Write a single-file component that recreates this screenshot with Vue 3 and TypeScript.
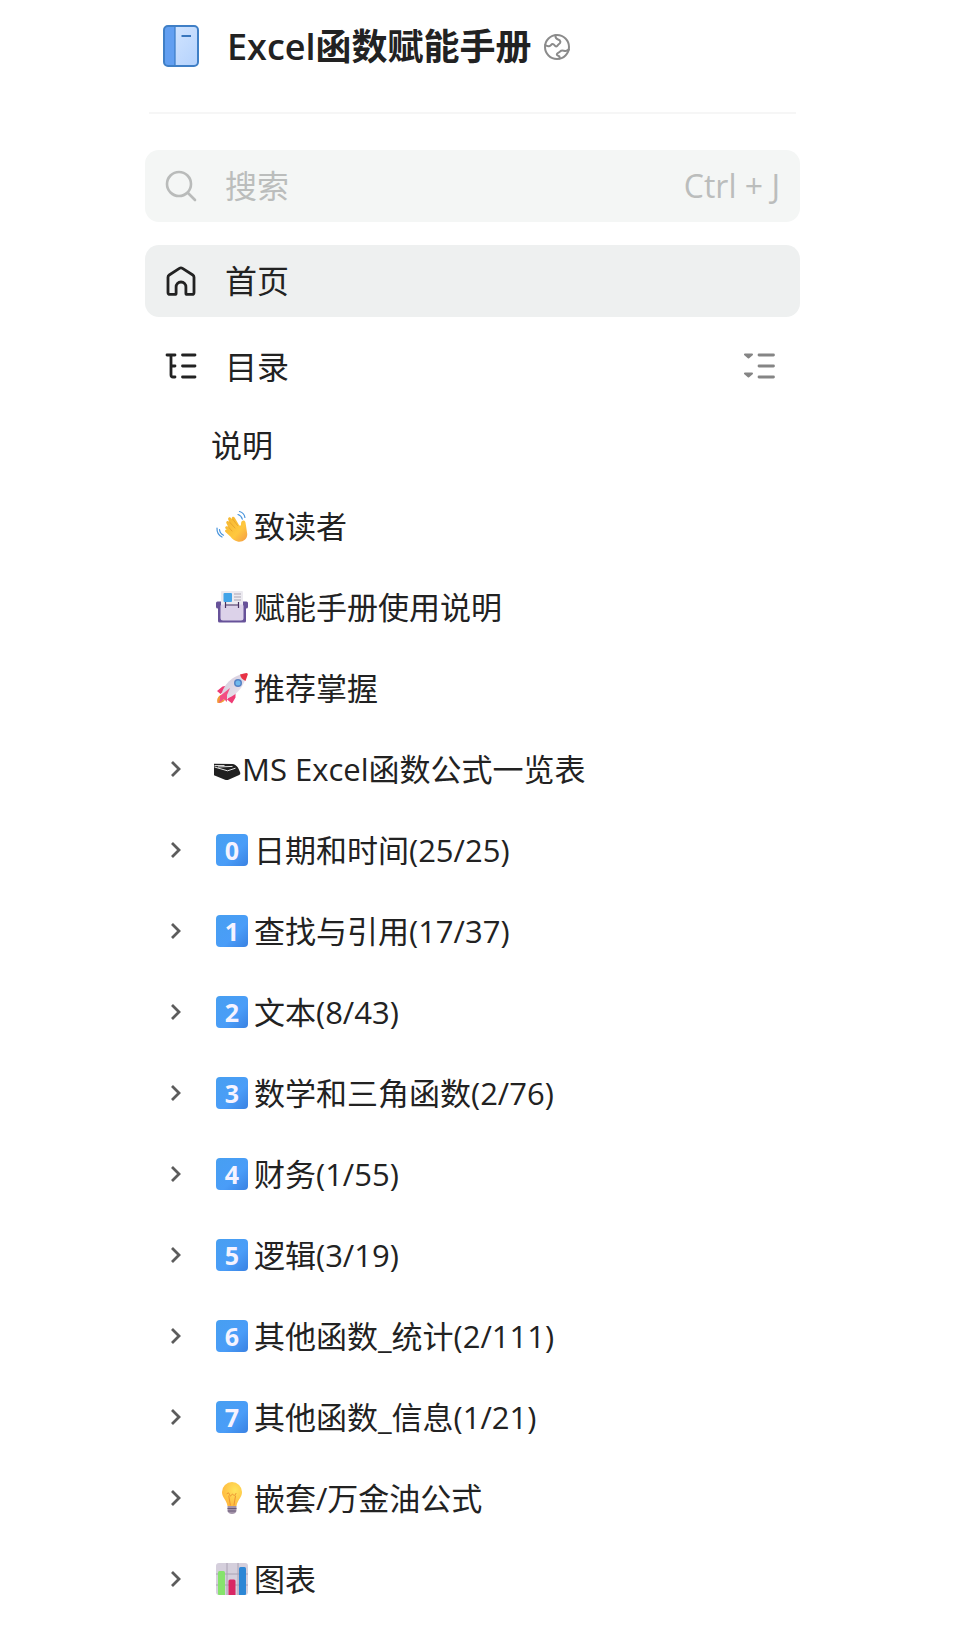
<script setup lang="ts">
import { ref } from 'vue'

interface Chapter {
  icon?: 'wave' | 'cards' | 'rocket' | 'tray' | 'bulb' | 'chart' | 'digit'
  digit?: string
  title: string
  expandable: boolean
}

const keyword = ref('')

const chapters: Chapter[] = [
  { title: '说明', expandable: false },
  { icon: 'wave', title: '致读者', expandable: false },
  { icon: 'cards', title: '赋能手册使用说明', expandable: false },
  { icon: 'rocket', title: '推荐掌握', expandable: false },
  { icon: 'tray', title: 'MS Excel函数公式一览表', expandable: true },
  { icon: 'digit', digit: '0', title: '日期和时间(25/25)', expandable: true },
  { icon: 'digit', digit: '1', title: '查找与引用(17/37)', expandable: true },
  { icon: 'digit', digit: '2', title: '文本(8/43)', expandable: true },
  { icon: 'digit', digit: '3', title: '数学和三角函数(2/76)', expandable: true },
  { icon: 'digit', digit: '4', title: '财务(1/55)', expandable: true },
  { icon: 'digit', digit: '5', title: '逻辑(3/19)', expandable: true },
  { icon: 'digit', digit: '6', title: '其他函数_统计(2/111)', expandable: true },
  { icon: 'digit', digit: '7', title: '其他函数_信息(1/21)', expandable: true },
  { icon: 'bulb', title: '嵌套/万金油公式', expandable: true },
  { icon: 'chart', title: '图表', expandable: true },
]
</script>

<template>
  <aside class="sidebar">
    <header class="book">
      <svg class="book-icon" viewBox="0 0 36 44" aria-hidden="true">
        <defs>
          <linearGradient id="cover" x1="0" y1="0" x2="1" y2="1">
            <stop offset="0" stop-color="#d6e7ff" />
            <stop offset="1" stop-color="#b4d2fd" />
          </linearGradient>
        </defs>
        <rect x="1" y="1" width="34" height="40" rx="4" fill="url(#cover)" />
        <path d="M5 1h7v40H5a4 4 0 0 1-4-4V5a4 4 0 0 1 4-4z" fill="#629ff1" />
        <path d="M12 1v40" stroke="#3e7fc9" stroke-width="1.300" />
        <rect x="1" y="1" width="34" height="40" rx="4" fill="none" stroke="#3f7fc6" stroke-width="2" />
        <path d="M18.500 11h9.500" stroke="#3876bd" stroke-width="2" />
      </svg>
      <h1 class="book-title">Excel函数赋能手册</h1>
      <svg class="globe" viewBox="0 0 26 26" role="img" aria-label="公开" fill="none" stroke="#8b8b8b" stroke-width="2" stroke-linejoin="round" stroke-linecap="round">
        <circle cx="13" cy="13" r="12" />
        <path d="M11.500 1.200c-.3 2 .4 3.500 2.600 4.300 2.600.9 3 3 .9 4.500-1.700 1.200-1.300 2.700-2.800 2.600-1.800-.2-1.600-2.600-3.600-2.600-1.700 0-1.600 2-3.500 2.200-1.500.2-2.800-.3-3.900-1.200" />
        <path d="M24.900 15.500c-1.500.8-2.600 1.900-3.900 1.500-1.700-.5-3.600-1-4.800.4-1.100 1.300-3.400 1.400-3.400 3 0 1.700 2.900 1 2.900 2.800 0 .5-.2.9-.4 1.300" />
      </svg>
    </header>

    <div class="bar search">
      <svg class="lead" viewBox="0 0 32 32" aria-hidden="true" fill="none" stroke="#b9bbba" stroke-width="2.600" stroke-linecap="round">
        <circle cx="14" cy="14" r="12" />
        <path d="M23 23l7 7" />
      </svg>
      <input v-model="keyword" class="search-input" type="text" placeholder="搜索" aria-label="搜索" />
      <kbd class="hint">Ctrl + J</kbd>
    </div>

    <a class="bar home" href="#home">
      <svg class="lead" viewBox="0 0 32 32" aria-hidden="true" fill="none" stroke="#222" stroke-width="2.800" stroke-linejoin="round">
        <path d="M3 12.200c0-1 .4-1.700 1.200-2.200l10.200-6.600c1-.6 2.100-.6 3.100 0L27.800 10c.8.500 1.200 1.200 1.200 2.200V27.400c0 1.300-.7 2-2 2h-4.900c-.8 0-1.200-.4-1.200-1.200V22c0-3-2-5-4.900-5s-4.900 2-4.900 5v6.200c0 .8-.4 1.200-1.200 1.200H5c-1.300 0-2-.7-2-2z" />
      </svg>
      <span>首页</span>
    </a>

    <div class="bar toc-head">
      <svg class="lead" viewBox="0 0 32 32" aria-hidden="true" fill="none" stroke="#222" stroke-width="2.800" stroke-linecap="round">
        <path d="M2 4h8M6 4v20c0 1.500.5 2 2 2H10M6 15H10M17.500 4h12.500M17.500 15h12.500M17.500 26h12.500" />
      </svg>
      <h2 class="toc-title">目录</h2>
      <button class="fold" type="button" aria-label="全部折叠">
        <svg viewBox="0 0 32 32" aria-hidden="true" fill="none" stroke="#858585" stroke-width="2.800" stroke-linecap="round">
          <path d="M15 4h14.500M15 15h14.500M15 26h14.500" />
          <path d="M1 3.500h7L4.500 6.500zM1 22.500h7L4.500 25.500z" fill="#858585" stroke-width="2" stroke-linejoin="round" />
        </svg>
      </button>
    </div>

    <nav aria-label="目录">
      <ul class="toc">
        <li v-for="item in chapters" :key="item.title" class="row">
          <button v-if="item.expandable" class="expand" type="button" :aria-label="`展开 ${item.title}`">
            <svg viewBox="0 0 12 18" aria-hidden="true" fill="none" stroke="#5c5c5c" stroke-width="2.800">
              <path d="M2 2l7 7-7 7" />
            </svg>
          </button>
          <span v-else class="expand"></span>

          <a class="entry" href="#chapter">
            <span v-if="item.icon === 'digit'" class="emoji keycap">{{ item.digit }}</span>

            <svg v-else-if="item.icon === 'wave'" class="emoji" viewBox="0 0 32 32" aria-hidden="true">
              <defs>
                <linearGradient id="skin" x1="0" y1="0" x2="1" y2="1">
                  <stop offset="0" stop-color="#f4b52e" />
                  <stop offset="0.600" stop-color="#ffc83f" />
                  <stop offset="1" stop-color="#f49a45" />
                </linearGradient>
              </defs>
              <path d="M9.500 18.500c-1-1.500.8-3 2-1.800l1.200 1-2.300-4.500c-.8-1.700 1.500-3 2.500-1.400l.6 1-1.300-3.400c-.6-1.800 1.800-2.900 2.900-1.200l.8 1.300c-.9-2.500 1.700-3.700 3-1.600l4.400 7.600 1.600.1c.3-2-.3-4 1.700-4.900 2-.8 3 1 3.100 3l1.500 10c.5 5.500-4.500 8.800-9.600 7.800-3-.6-5.200-2.500-7-4.800L9.500 22c-1.200-1.300.1-2.800 1.400-1.900z" fill="url(#skin)" />
              <path d="M12 16.500l4 4.500M13.500 12l5.500 6M17 9.500l4.500 6" stroke="#e8a22a" stroke-width=".9" fill="none" stroke-linecap="round" />
              <path d="M22 4.500c2.300.8 3.700 2.400 4.300 4.700M23.500 1.500c3 .9 5 3 5.400 6M3.500 19.500c.3 2.700 1.700 4.700 4 5.700M1 18c-.2 3.800 1.700 7.300 5 9" stroke="#4894dc" stroke-width="1.200" fill="none" stroke-linecap="round" />
            </svg>

            <svg v-else-if="item.icon === 'cards'" class="emoji" viewBox="0 0 32 32" aria-hidden="true">
              <path d="M1.500 10.500h29q1.500 0 1.500 1.500v4q0 1.500-2 1.500V30q0 1.500-1.500 1.500h-25Q2 31.500 2 30V17.500q-2 0-2-1.500v-4q0-1.500 1.500-1.500z" fill="#675299" />
              <rect x="5" y="0" width="22" height="17" rx="1" fill="#eceaf0" />
              <rect x="7.500" y="2" width="8.500" height="9" rx="1" fill="#42a4e8" />
              <path d="M18 3h7M18 6h7M18 9h7" stroke="#a9a4b2" />
              <path d="M4.500 15q0-1.500 1.500-1.500h20Q27.500 13.500 27.500 15v12q0 2.500-2.500 2.500H7q-2.500 0-2.500-2.500z" fill="#dcd2e9" />
              <path d="M9.500 11v6M22.500 11v6M9.500 14h13" stroke="#473261" stroke-width="1.200" />
            </svg>

            <svg v-else-if="item.icon === 'rocket'" class="emoji" viewBox="0 0 32 32" aria-hidden="true">
              <defs>
                <linearGradient id="hull" x1="0" y1="0" x2="1" y2="1">
                  <stop offset="0" stop-color="#cfc6d8" />
                  <stop offset="1" stop-color="#f0eaf2" />
                </linearGradient>
              </defs>
              <path d="M7 22c-4 1-7 4.500-5.500 9 4.500.5 8-2 8.500-6z" fill="#f39a38" />
              <path d="M4.500 22L1 19l5.500-4.500L14 13zM11 27.500l5 4 3.500-6V17z" fill="#ee3c75" />
              <path d="M5 25.500C6 13 17 3 30.500 1 29.500 14 19 26 7 27.500z" fill="url(#hull)" />
              <path d="M24 2.500L30.500 1q1.500 0 1.300 1.500L29.500 9Q25 7 24 2.500z" fill="#e83245" />
              <path d="M4 24l10-8-3 7 0 7-3-3-5 4 1-4z" fill="#f34e83" />
              <circle cx="22" cy="11" r="4" fill="#5582c5" />
              <circle cx="22" cy="11" r="2.500" fill="#70b9ed" />
            </svg>

            <svg v-else-if="item.icon === 'tray'" class="emoji emoji-small" viewBox="0 0 28 32" aria-hidden="true">
              <path d="M1 10.800l18.500.3q1.500 0 2.800 1l1.500 1.200q1 .8 1.500 2l1.900 4.200q.7 1.700-1 2.500L16 26.500q-2 .9-4 .2L1 22.300z" fill="#202020" />
              <path d="M1.500 14l13 3.800 8-2.600M5 14l14.500-.6M1.500 12.600h10" fill="none" stroke="#fff" stroke-width=".9" />
            </svg>

            <svg v-else-if="item.icon === 'bulb'" class="emoji" viewBox="0 0 32 32" aria-hidden="true">
              <defs>
                <radialGradient id="glass" cx=".65" cy=".35" r=".7">
                  <stop offset="0" stop-color="#ffe45b" />
                  <stop offset="1" stop-color="#ffb83e" />
                </radialGradient>
              </defs>
              <path d="M16 0a10 10 0 0 1 10 10c0 6-4.500 7.500-5.500 14h-9C10.500 17.500 6 16 6 10A10 10 0 0 1 16 0z" fill="url(#glass)" />
              <path d="M14.300 23l-1.500-9M18 23l1.500-9M11 11.500q2-2 2.500 1t3-.5q2.500 3 3.500-.5" fill="none" stroke="#ed9332" stroke-width="1" stroke-linecap="round" />
              <path d="M11.500 24h9v5q-1 3-4.500 3t-4.500-3z" fill="#a393a9" />
              <path d="M11.500 26.500h9M11.800 29h8" stroke="#685a78" />
            </svg>

            <svg v-else-if="item.icon === 'chart'" class="emoji" viewBox="0 0 32 32" aria-hidden="true">
              <rect width="32" height="32" rx="3" fill="#d5cfdc" />
              <path d="M11 0v32M22 0v32M0 11h32M0 22h32" stroke="#aaa2b4" />
              <path d="M2 9.500Q2 8 3.500 8h4Q9 8 9 9.500V32H3q-1 0-1-1z" fill="#86e36c" />
              <path d="M12.500 18q0-1.500 1.500-1.500h4q1.500 0 1.500 1.500v14h-7z" fill="#d92764" />
              <path d="M23 5.500Q23 4 24.500 4h4Q30 4 30 5.500V31q0 1-1 1h-6z" fill="#2d87d5" />
            </svg>

            <span class="entry-text">{{ item.title }}</span>
          </a>
        </li>
      </ul>
    </nav>
  </aside>
</template>

<style>
body {
  margin: 0;
  background: #fff;
}
</style>

<style scoped>
.sidebar {
  box-sizing: border-box;
  padding: 0 177px 12px 145px;
  color: #222;
  font-family: "Open Sans", "Noto Sans CJK SC", sans-serif;
  font-size: 31px;
  line-height: 48px;
  white-space: nowrap;
}

svg {
  display: block;
  flex: none;
}

.book {
  display: flex;
  align-items: center;
  height: 94px;
  margin: 0 4px 36px;
  padding: 0 14px 18px;
  border-bottom: 2px solid #f6f6f6;
}

.book-icon {
  width: 36px;
  height: 44px;
}

.book-title {
  margin: 0 12px 0 28px;
  font-size: 36px;
  font-weight: 600;
}

.globe {
  width: 26px;
  height: 26px;
}

.bar {
  display: flex;
  box-sizing: border-box;
  align-items: center;
  height: 72px;
  padding: 0 20px;
  border-radius: 14px;
  color: inherit;
  font-size: 32px;
  text-decoration: none;
}

.lead {
  width: 32px;
  height: 32px;
  margin-right: 28px;
}

.search {
  margin-bottom: 23px;
  background: #f4f6f5;
}

.search-input {
  flex: 1;
  min-width: 0;
  height: 48px;
  padding: 0;
  border: 0;
  outline: 0;
  background: transparent;
  color: inherit;
  font: inherit;
}

.search-input::placeholder {
  color: #bbbdbc;
  opacity: 1;
}

.hint {
  color: #bbbdbc;
  font: inherit;
}

.home {
  margin-bottom: 14px;
  background: #eef0f0;
}

.toc-title {
  flex: 1;
  margin: 0;
  font-size: 32px;
  font-weight: 400;
}

.fold,
.expand {
  display: flex;
  align-items: center;
  padding: 0;
  border: 0;
  background: none;
}

.fold {
  justify-content: center;
  width: 40px;
  height: 40px;
}

.fold svg {
  width: 32px;
  height: 32px;
}

.toc {
  margin: 1px 0 0;
  padding: 0;
  list-style: none;
}

.row {
  display: flex;
  align-items: center;
  height: 81px;
}

.expand {
  box-sizing: border-box;
  width: 66px;
  height: 40px;
  padding-left: 25px;
}

.expand svg {
  width: 12px;
  height: 18px;
}

.entry {
  display: flex;
  align-items: center;
  color: inherit;
  text-decoration: none;
}

.emoji {
  width: 32px;
  height: 32px;
  margin: 0 6px 0 5px;
}

.emoji-small {
  width: 28px;
  margin: 0 1px 0 2px;
}

.keycap {
  border-radius: 4px;
  background: linear-gradient(135deg, #479ff1, #4a9df8 60%, #3981e2);
  color: #f5f3ff;
  font-size: 25px;
  font-weight: 700;
  line-height: 32px;
  text-align: center;
}
</style>
